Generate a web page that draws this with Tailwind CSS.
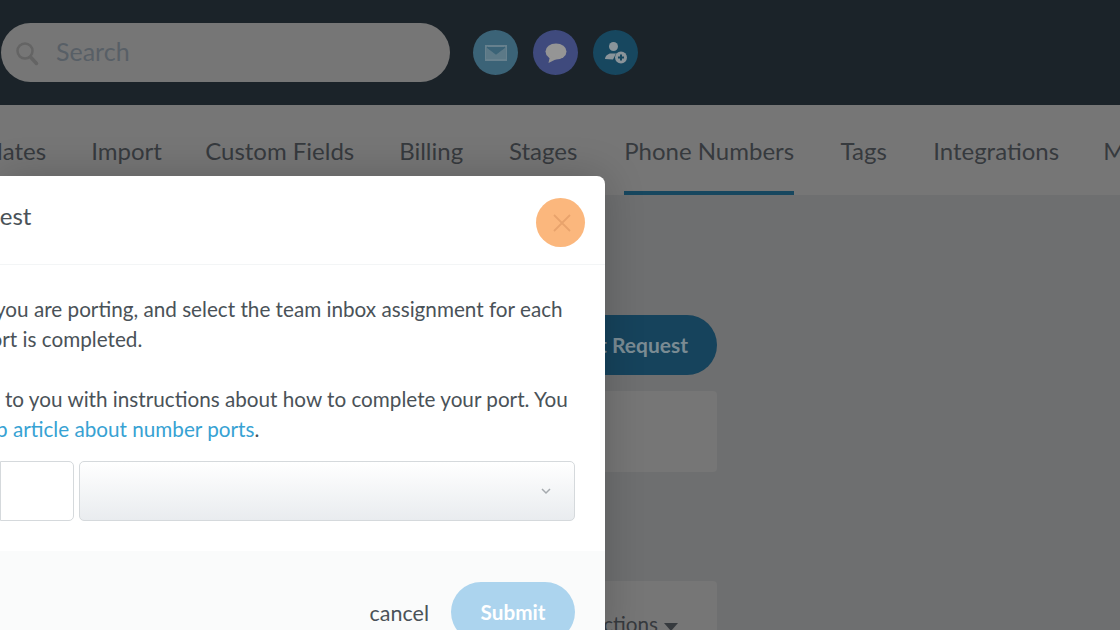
<!DOCTYPE html>
<html lang="en">
<head>
  <meta charset="UTF-8">
  <title>Phone Numbers</title>
  <script src="https://cdn.jsdelivr.net/npm/@tailwindcss/browser@4"></script>
</head>
<body class="relative w-[1120px] h-[630px] overflow-hidden bg-[#6e6f70] font-['Lato','Open_Sans',sans-serif]">

  <!-- header -->
  <header class="h-[105px] bg-[#1b2329] flex items-center">
    <div class="ml-px w-[449px] h-[59px] rounded-full bg-[#767676] flex items-center">
      <svg class="ml-[14px] w-[24px] h-[26px] text-[#646464]" viewBox="0 0 24 26" fill="none" stroke="currentColor">
        <circle cx="10" cy="11" r="7.500" stroke-width="2.500"/>
        <path d="M15.500 17l6 6.500" stroke-width="3.500" stroke-linecap="round"/>
      </svg>
      <span class="ml-[17px] mt-[-2px] text-[25px] text-[#585f66]">Search</span>
    </div>
    <div class="ml-[23px] flex gap-[15px]">
      <div class="w-[45px] h-[45px] rounded-full bg-[#3b6377] flex items-center justify-center">
        <svg class="w-[22px] h-[16px]" viewBox="0 0 22 16" fill="#5c7987" stroke="#67818e" stroke-width="2">
          <rect x="1" y="1" width="20" height="14" fill="none"/>
          <path d="M1 2l10 7 10-7v12H1z" stroke="none"/>
          <path d="M2 2l9 7 9-7" fill="none" stroke="#3b6377" stroke-width="1.200"/>
        </svg>
      </div>
      <div class="w-[45px] h-[45px] rounded-full bg-[#3f4a7d] flex items-center justify-center">
        <svg class="w-[22px] h-[20px]" viewBox="0 0 22 20" fill="#959595">
          <ellipse cx="11" cy="8.500" rx="10.500" ry="8"/>
          <path d="M5 13l-1.500 7 8-4z"/>
        </svg>
      </div>
      <div class="w-[45px] h-[45px] rounded-full bg-[#17475f] flex items-center justify-center">
        <svg class="w-[24px] h-[24px]" viewBox="0 0 24 24" fill="#8a949a">
          <circle cx="9.500" cy="5.500" r="4.500"/>
          <path d="M1 18c0-3 3-5 5-5.500h6l-3 6z"/>
          <circle cx="17" cy="16.500" r="6"/>
          <path d="M17 13.500v6M14 16.500h6" stroke="#17475f" stroke-width="2"/>
        </svg>
      </div>
    </div>
  </header>

  <!-- tabs -->
  <nav class="h-[90px] bg-[#767676] flex items-start gap-[45px] text-[24px] leading-[32px] text-[#363a3e] whitespace-nowrap">
    <a class="shrink-0 ml-[-60px] pt-[30px]">Templates</a>
    <a class="shrink-0 pt-[30px] w-[69px] text-center">Import</a>
    <a class="shrink-0 pt-[30px] w-[149px] text-center">Custom Fields</a>
    <a class="shrink-0 pt-[30px] w-[63px] text-center">Billing</a>
    <a class="shrink-0 pt-[30px] w-[72px] text-center">Stages</a>
    <a class="shrink-0 pt-[30px] w-[170px] text-center h-[90px] border-b-4 border-[#17475f]">Phone Numbers</a>
    <a class="shrink-0 pt-[30px] w-[49px] text-center">Tags</a>
    <a class="shrink-0 pt-[30px] w-[125px] text-center">Integrations</a>
    <a class="shrink-0 pt-[30px]">More</a>
  </nav>

  <!-- page behind the modal -->
  <main class="flex flex-col items-end w-[717px]">
    <button class="mt-[120px] w-[300px] h-[60px] rounded-full bg-[#16435c] text-right pr-[29px] text-[21px] font-bold text-[#7a8b93]">Add Port Request</button>
    <div class="mt-[16px] w-[300px] h-[81px] rounded bg-[#767676]"></div>
    <div class="mt-[109px] w-[300px] h-[60px] rounded-t bg-[#767676] flex justify-end items-center pr-[39px] pt-[27px] text-[20.700px] text-[#363a3e]">
      <span>Actions</span>
      <svg class="ml-[6px] mt-[4px] w-[14px] h-[8px]" viewBox="0 0 14 8" fill="#363a3e"><path d="M0 0h14L7 8z"/></svg>
    </div>
  </main>

  <!-- modal -->
  <section class="absolute left-0 top-[176px] w-[605px] h-[470px] bg-white rounded-tr-lg overflow-hidden shadow-[0_0_40px_rgba(0,0,0,0.2)] flex flex-col text-[20.700px] leading-[30px] text-[#4a5258] whitespace-nowrap">
    <div class="h-[89px] shrink-0 border-b border-[#f3f5f6] relative">
      <p class="ml-[-54px] pt-[25px] text-[24px]">Request</p>
      <button class="absolute right-[20px] top-[22px] w-[49px] h-[49px] rounded-full bg-[#fbb77d] flex items-center justify-center">
        <svg class="w-[20px] h-[20px] ml-[3px]" viewBox="0 0 20 20" stroke="#e8a36c" stroke-width="1.800"><path d="M2 2l16 16M18 2L2 18"/></svg>
      </button>
    </div>
    <div class="pt-[29px]">
      <p class="ml-[-5px]">you are porting, and select the team inbox assignment for each</p>
      <p class="ml-[-21px]">port is completed.</p>
      <p class="mt-[30px] ml-[5px]">to you with instructions about how to complete your port. You</p>
      <p class="ml-[-4px]"><span class="text-[#37a2d3]">p article about number ports</span>.</p>
    </div>
    <div class="mt-[17px] flex gap-[5px] shrink-0">
      <div class="w-[74px] h-[60px] bg-white border border-[#d5d9dc] rounded-r-[5px]"></div>
      <div class="w-[496px] h-[60px] border border-[#d5d9dc] rounded-[5px] bg-linear-to-b from-white to-[#e9ecef] flex items-center justify-end pr-[23px]">
        <svg class="w-[10px] h-[7px]" viewBox="0 0 10 7" fill="none" stroke="#a5aaae" stroke-width="1.500"><path d="M1 1l4 4 4-4"/></svg>
      </div>
    </div>
    <div class="mt-[30px] flex-1 bg-[#fafbfb] flex justify-end items-start pt-[31px] pr-[30px]">
      <span class="mt-[16px] mr-[22px] text-[21.500px]">cancel</span>
      <button class="w-[124px] h-[60px] rounded-full bg-[#acd4ee] text-white font-bold">Submit</button>
    </div>
  </section>
</body>
</html>
